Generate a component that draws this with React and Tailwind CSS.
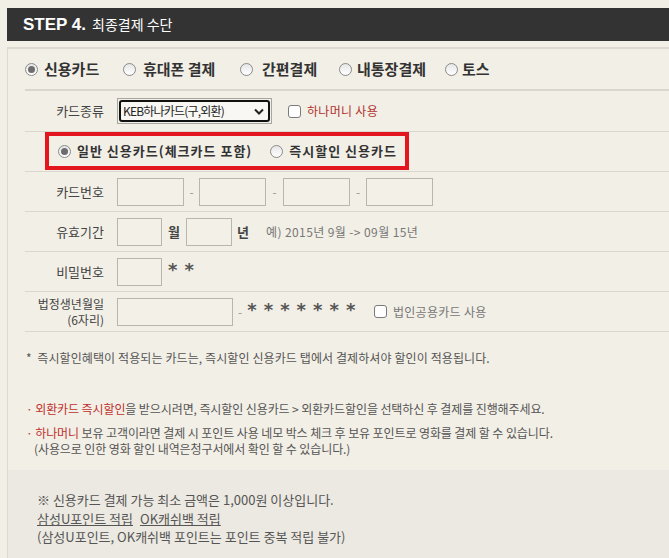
import React from "react";

const KR = { fontFamily: '"Noto Sans CJK KR", "Noto Sans", sans-serif' };
const AST = { fontFamily: '"DejaVu Sans", sans-serif' };

function Radio({ checked }) {
  return (
    <span className="relative inline-flex w-[13px] h-[13px] shrink-0 rounded-full border border-[#8a8a8a] bg-gradient-to-b from-[#e6e6e6] to-white items-center justify-center">
      {checked && <span className="w-[7px] h-[7px] rounded-full bg-[#6d6d6d]" />}
    </span>
  );
}

function Check() {
  return <span className="inline-block w-[13px] h-[13px] shrink-0 rounded-[3px] border border-[#7a7a7a] bg-white" />;
}

function Box({ w }) {
  return <span className={`inline-block h-[28px] border border-[#b9b6ad] bg-[#f3f0e8] ${w}`} />;
}

function Row({ label, children, h = "h-[40px]", lc = "text-[13px] leading-[16px]" }) {
  return (
    <div className={`flex items-center ${h} border-b border-[#dad7ce]`}>
      <div className={`w-[79px] text-right text-[#444] ${lc}`}>{label}</div>
      <div className="ml-[13px] flex items-center">{children}</div>
    </div>
  );
}

export default function App() {
  return (
    <div className="w-[669px] h-[558px] bg-[#f2efe6] overflow-hidden pt-[8px] pl-[7px]" style={KR}>
      <div className="h-[33px] bg-[#333333] flex items-center pl-[16px] text-white">
        <span className="text-[17px] font-bold" style={{ fontFamily: '"Liberation Sans", Arial, sans-serif' }}>STEP 4.</span>
        <span className="ml-[6px] text-[14px]">최종결제 수단</span>
      </div>
      <div className="mt-[6px] border-t-2 border-l border-[#dcd9d0] h-[520px] flex flex-col">
        <div className="pl-[17px]">
          <div className="h-[42px] flex items-center border-b-2 border-[#d9d6cd] text-[15px] font-bold text-[#333] pt-[1px] whitespace-nowrap">
            <Radio checked />
            <span className="ml-[6px] inline-block w-[60px]">신용카드</span>
            <span className="ml-[19px] inline-flex"><Radio /></span>
            <span className="ml-[7px] inline-block w-[75px]">휴대폰 결제</span>
            <span className="ml-[22px] inline-flex"><Radio /></span>
            <span className="ml-[9px] inline-block w-[58px]">간편결제</span>
            <span className="ml-[19px] inline-flex"><Radio /></span>
            <span className="ml-[5px] inline-block w-[73px]">내통장결제</span>
            <span className="ml-[15px] inline-flex"><Radio /></span>
            <span className="ml-[4px]">토스</span>
          </div>
          <Row label="카드종류" h="h-[41px]">
            <div className="w-[155px] h-[26px] border border-[#a9a6a0] p-[1px]">
              <div className="h-full rounded-[3px] border-2 border-[#111] bg-[#f8f7f3] flex items-center justify-between pl-[2px] pr-[4px]">
                <span className="text-[12px] text-[#222] tracking-[-0.8px]">KEB하나카드(구,외환)</span>
                <svg width="10" height="7" viewBox="0 0 10 7"><path d="M1 1.5 L5 5.5 L9 1.5" stroke="#222" strokeWidth="2" fill="none" /></svg>
              </div>
            </div>
            <span className="ml-[16px] inline-flex"><Check /></span>
            <span className="ml-[6px] text-[12px] text-[#b0302c] tracking-[0.3px]">하나머니 사용</span>
          </Row>
          <div className="h-[40px] border-b border-[#dad7ce]">
            <div className="ml-[20px] w-[364px] h-[38px] border-4 border-[#e3151f] flex items-center pl-[9px] text-[13px] font-bold text-[#333] tracking-[1px] whitespace-nowrap">
              <Radio checked />
              <span className="ml-[6px]">일반 신용카드(체크카드 포함)</span>
              <span className="ml-[18px] inline-flex"><Radio /></span>
              <span className="ml-[6px]">즉시할인 신용카드</span>
            </div>
          </div>
          <Row label="카드번호">
            <Box w="w-[67px]" />
            <span className="w-[15px] text-center text-[12px] text-[#999]">-</span>
            <Box w="w-[67px]" />
            <span className="w-[17px] text-center text-[12px] text-[#999]">-</span>
            <Box w="w-[67px]" />
            <span className="w-[16px] text-center text-[12px] text-[#999]">-</span>
            <Box w="w-[67px]" />
          </Row>
          <Row label="유효기간">
            <Box w="w-[45px]" />
            <span className="w-[24px] text-center text-[13px] font-bold text-[#444]">월</span>
            <Box w="w-[46px]" />
            <span className="ml-[5px] text-[13px] font-bold text-[#444]">년</span>
            <span className="ml-[17px] text-[12px] text-[#777] tracking-[0.4px]">예) 2015년 9월 -&gt; 09월 15년</span>
          </Row>
          <Row label="비밀번호">
            <Box w="w-[45px]" />
            <span className="ml-[6px] text-[18px] font-bold text-[#555] tracking-[0.4px] mt-[-5px]" style={AST}>* *</span>
          </Row>
          <Row label={<>법정생년월일<br />(6자리)</>} lc="text-[12px] leading-[16px]">
            <Box w="w-[116px]" />
            <span className="ml-[5px] text-[12px] text-[#999]">-</span>
            <span className="ml-[5px] text-[18px] font-bold text-[#555] tracking-[0.4px] mt-[-5px]" style={AST}>* * * * * * *</span>
            <span className="ml-[18px] inline-flex"><Check /></span>
            <span className="ml-[6px] text-[12px] text-[#777] tracking-[0.3px]">법인공용카드 사용</span>
          </Row>
        </div>
        <div className="pl-[18px] text-[12px] text-[#555]">
          <div className="mt-[17px] leading-[18px] tracking-[0.1px]">*&nbsp; 즉시할인혜택이 적용되는 카드는, 즉시할인 신용카드 탭에서 결제하셔야 할인이 적용됩니다.</div>
          <div className="mt-[33px] leading-[18px] tracking-[-0.1px]"><span className="text-[#c0302d]">· 외환카드 즉시할인</span>을 받으시려면, 즉시할인 신용카드 &gt; 외환카드할인을 선택하신 후 결제를 진행해주세요.</div>
          <div className="mt-[7px] leading-[16px] tracking-[-0.1px]"><span className="text-[#c0302d]">· 하나머니</span> 보유 고객이라면 결제 시 포인트 사용 네모 박스 체크 후 보유 포인트로 영화를 결제 할 수 있습니다.</div>
          <div className="leading-[16px] pl-[8px] tracking-[-0.1px]">(사용으로 인한 영화 할인 내역은청구서에서 확인 할 수 있습니다.)</div>
        </div>
        <div className="mt-[13px] flex-1 bg-[#ebe9e1] pl-[29px] pt-[21px] text-[13px] text-[#555] leading-[18.5px]">
          <div>※ 신용카드 결제 가능 최소 금액은 1,000원 이상입니다.</div>
          <div><span className="underline">삼성U포인트 적립</span><span className="ml-[7px] underline">OK캐쉬백 적립</span></div>
          <div>(삼성U포인트, OK캐쉬백 포인트는 포인트 중복 적립 불가)</div>
        </div>
      </div>
    </div>
  );
}
